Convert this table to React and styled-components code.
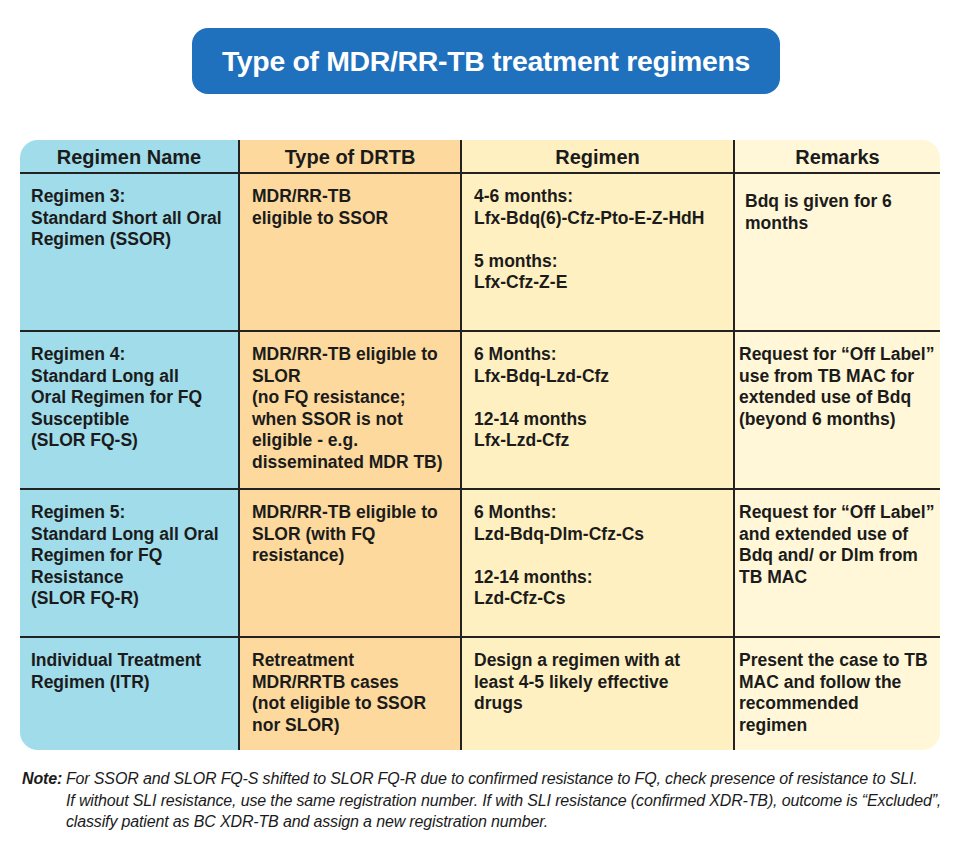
import React from "react";
import styled, { createGlobalStyle } from "styled-components";

const GlobalStyle = createGlobalStyle`
  html, body {
    margin: 0;
    padding: 0;
    background: #ffffff;
  }
  body {
    font-family: "Liberation Sans", Arial, sans-serif;
    color: #1b1b1b;
  }
`;

const Page = styled.div`
  width: 972px;
  height: 844px;
  box-sizing: border-box;
  padding-top: 28px;
  display: flex;
  flex-direction: column;
  align-items: center;
`;

const TitlePill = styled.div`
  width: 588px;
  height: 66px;
  border-radius: 16px;
  background: #1f70bd;
  color: #ffffff;
  font-size: 28.4px;
  font-weight: bold;
  letter-spacing: -0.3px;
  display: flex;
  align-items: center;
  justify-content: center;
`;

const Table = styled.div`
  margin-top: 46px;
  margin-left: -12px;
  width: 920px;
  display: grid;
  grid-template-columns: 218px 222px 273px 207px;
  grid-template-rows: 32px 158px 158px 148px 114px;
  border-radius: 18px;
  overflow: hidden;
`;

const colBg = ["#a0dcea", "#fdd99d", "#fff0c1", "#fff7d7"];

const Cell = styled.div`
  background: ${({ $col }) => colBg[$col]};
  border-left: ${({ $col }) => ($col === 0 ? "none" : "2px solid #222")};
  border-top: ${({ $row }) => ($row === 0 ? "none" : "2px solid #222")};
  box-sizing: border-box;
  padding: ${({ $top }) => $top}px 0 0 ${({ $left }) => $left}px;
  font-size: 17.5px;
  font-weight: bold;
  line-height: 21.5px;
  white-space: pre;
`;

const HeadCell = styled(Cell)`
  padding: 0;
  font-size: 20px;
  display: flex;
  align-items: center;
  justify-content: center;
  padding-top: 4px;
`;

const Gap = styled.div`
  height: 21.5px;
`;

const Notes = styled.div`
  margin-top: 18px;
  width: 940px;
  margin-left: 12px;
  display: grid;
  grid-template-columns: 44px 1fr;
  font-style: italic;
  font-size: 16px;
  letter-spacing: -0.15px;
  line-height: 21.5px;
  font-family: "Liberation Sans", Arial, sans-serif;
  color: #1b1b1b;
`;

const NoteLabel = styled.div`
  font-weight: bold;
`;

const NoteText = styled.div`
  white-space: nowrap;
`;

const headers = ["Regimen Name", "Type of DRTB", "Regimen", "Remarks"];

const rows = [
  {
    cells: [
      "Regimen 3:\nStandard Short all Oral\nRegimen (SSOR)",
      "MDR/RR-TB\neligible to SSOR",
      ["4-6 months:\nLfx-Bdq(6)-Cfz-Pto-E-Z-HdH", "5 months:\nLfx-Cfz-Z-E"],
      "Bdq is given for 6\nmonths",
    ],
    topFor: [12, 12, 12, 17],
    leftFor: [11, 12, 12, 10],
  },
  {
    cells: [
      "Regimen 4:\nStandard Long all\nOral Regimen for FQ\nSusceptible\n(SLOR FQ-S)",
      "MDR/RR-TB eligible to\nSLOR\n(no FQ resistance;\nwhen SSOR is not\neligible - e.g.\ndisseminated MDR TB)",
      ["6 Months:\nLfx-Bdq-Lzd-Cfz", "12-14 months\nLfx-Lzd-Cfz"],
      "Request for \u201cOff Label\u201d\nuse from TB MAC for\nextended use of Bdq\n(beyond 6 months)",
    ],
    topFor: [12, 12, 12, 12],
    leftFor: [11, 12, 12, 4],
  },
  {
    cells: [
      "Regimen 5:\nStandard Long all Oral\nRegimen for FQ\nResistance\n(SLOR FQ-R)",
      "MDR/RR-TB eligible to\nSLOR (with FQ\nresistance)",
      ["6 Months:\nLzd-Bdq-Dlm-Cfz-Cs", "12-14 months:\nLzd-Cfz-Cs"],
      "Request for \u201cOff Label\u201d\nand extended use of\nBdq and/ or Dlm from\nTB MAC",
    ],
    topFor: [12, 12, 12, 12],
    leftFor: [11, 12, 12, 4],
  },
  {
    cells: [
      "Individual Treatment\nRegimen (ITR)",
      "Retreatment\nMDR/RRTB cases\n(not eligible to SSOR\nnor SLOR)",
      "Design a regimen with at\nleast 4-5 likely effective\ndrugs",
      "Present the case to TB\nMAC and follow the\nrecommended\nregimen",
    ],
    topFor: [12, 12, 12, 12],
    leftFor: [11, 12, 12, 4],
  },
];

export default function App() {
  return (
    <>
      <GlobalStyle />
      <Page>
        <TitlePill>Type of MDR/RR-TB treatment regimens</TitlePill>
        <Table>
          {headers.map((h, i) => (
            <HeadCell key={h} $col={i} $row={0}>
              {h}
            </HeadCell>
          ))}
          {rows.map((r, ri) =>
            r.cells.map((c, ci) => (
              <Cell
                key={`${ri}-${ci}`}
                $col={ci}
                $row={ri + 1}
                $top={r.topFor[ci]}
                $left={r.leftFor[ci]}
              >
                {Array.isArray(c) ? (
                  <>
                    {c[0]}
                    <Gap />
                    {c[1]}
                  </>
                ) : (
                  c
                )}
              </Cell>
            ))
          )}
        </Table>
        <Notes>
          <NoteLabel>Note:</NoteLabel>
          <NoteText>
            For SSOR and SLOR FQ-S shifted to SLOR FQ-R due to confirmed resistance to FQ, check presence of resistance to SLI.
            <br />
            If without SLI resistance, use the same registration number. If with SLI resistance (confirmed XDR-TB), outcome is
            {" \u201cExcluded\u201d,"}
            <br />
            classify patient as BC XDR-TB and assign a new registration number.
          </NoteText>
        </Notes>
      </Page>
    </>
  );
}
